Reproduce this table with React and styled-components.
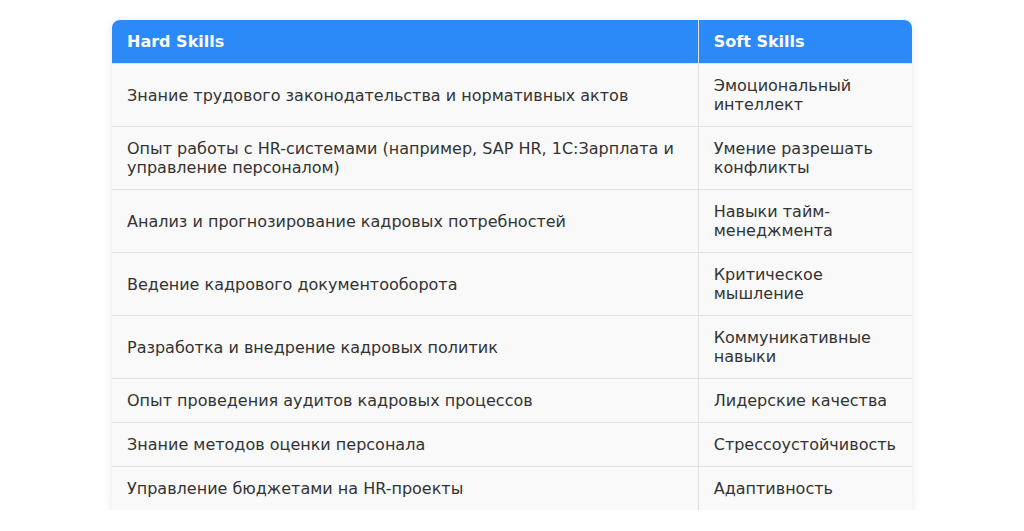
import React from "react";
import styled, { createGlobalStyle } from "styled-components";

const Global = createGlobalStyle`
  html, body { margin: 0; padding: 0; background: #ffffff; }
  body { font-family: "DejaVu Sans", sans-serif; }
`;

const Page = styled.div`
  display: flex;
  justify-content: center;
  padding-top: 20px;
`;

const Table = styled.table`
  width: 800px;
  border-collapse: separate;
  border-spacing: 0;
  box-shadow: 0 2px 10px rgba(0, 0, 0, 0.1);
  border-radius: 8px 8px 0 0;
  font-size: 16px;
  line-height: 19px;
  color: #333333;
`;

const Th = styled.th`
  background: #2b8af7;
  color: #ffffff;
  font-weight: bold;
  text-align: left;
  padding: 12px 15px;
  width: ${(p) => p.$w}px;
  border-right: ${(p) => (p.$last ? "none" : "1px solid #e0e0e0")};
  border-top-left-radius: ${(p) => (p.$first ? "8px" : "0")};
  border-top-right-radius: ${(p) => (p.$last ? "8px" : "0")};
`;

const Td = styled.td`
  background: #f9f9f9;
  padding: 12px 15px;
  vertical-align: middle;
  text-align: left;
  border-top: 1px solid #e0e0e0;
  border-right: ${(p) => (p.$last ? "none" : "1px solid #e0e0e0")};
`;

const rows = [
  ["Знание трудового законодательства и нормативных актов", "Эмоциональный интеллект"],
  ["Опыт работы с HR-системами (например, SAP HR, 1С:Зарплата и управление персоналом)", "Умение разрешать конфликты"],
  ["Анализ и прогнозирование кадровых потребностей", "Навыки тайм-менеджмента"],
  ["Ведение кадрового документооборота", "Критическое мышление"],
  ["Разработка и внедрение кадровых политик", "Коммуникативные навыки"],
  ["Опыт проведения аудитов кадровых процессов", "Лидерские качества"],
  ["Знание методов оценки персонала", "Стрессоустойчивость"],
  ["Управление бюджетами на HR-проекты", "Адаптивность"],
];

export default function App() {
  return (
    <>
      <Global />
      <Page>
        <Table>
          <thead>
            <tr>
              <Th $first $w={555}>Hard Skills</Th>
              <Th $last $w={183}>Soft Skills</Th>
            </tr>
          </thead>
          <tbody>
            {rows.map(([a, b], i) => (
              <tr key={i}>
                <Td>{a}</Td>
                <Td $last>{b}</Td>
              </tr>
            ))}
          </tbody>
        </Table>
      </Page>
    </>
  );
}
